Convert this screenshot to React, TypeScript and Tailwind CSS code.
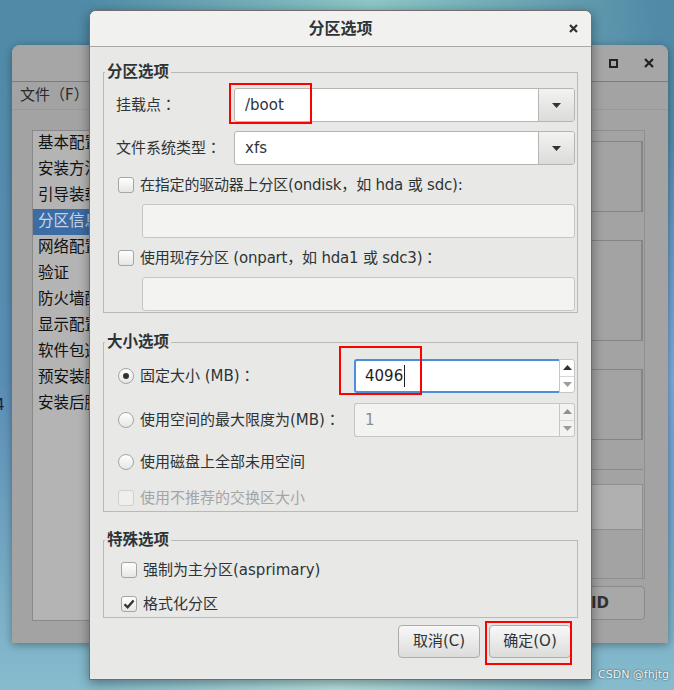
import type { ReactNode } from 'react';

const ink = 'text-[#2e3436]';

function Arrow({ dir, color }: { dir: 'up' | 'down'; color: string }) {
  return (
    <svg width="9" height="5" viewBox="0 0 9 5">
      <polygon points={dir === 'down' ? '0,0 9,0 4.5,5' : '0,5 9,5 4.5,0'} fill={color} />
    </svg>
  );
}

// centred full-width colon, as the GTK font draws it
function Colon() {
  return <span className="font-['Noto_Sans_CJK_TC',sans-serif]">：</span>;
}

function Check({ checked, disabled }: { checked?: boolean; disabled?: boolean }) {
  return (
    <span
      className={`flex h-[16px] w-[16px] shrink-0 items-center justify-center rounded-[3px] border ${
        disabled ? 'border-[#d0d0ce] bg-[#efefee]' : 'border-[#a5a5a2] bg-gradient-to-b from-white to-[#e6e6e4]'
      }`}
    >
      {checked ? (
        <svg width="12" height="10" viewBox="0 0 12 10">
          <path d="M1.5 5.2 L4.6 8.3 L10.6 1.4" stroke="#2e3436" strokeWidth="2.3" fill="none" />
        </svg>
      ) : null}
    </span>
  );
}

function Radio({ checked }: { checked?: boolean }) {
  return (
    <span className="flex h-[16px] w-[16px] shrink-0 items-center justify-center rounded-full border border-[#a5a5a2] bg-gradient-to-b from-white to-[#e6e6e4]">
      {checked ? <span className="h-[6px] w-[6px] rounded-full bg-[#2e3436]" /> : null}
    </span>
  );
}

function Combo({ value }: { value: string }) {
  return (
    <div className="flex h-[34px] flex-1 overflow-hidden rounded-[3px] border border-[#b5b5b2] bg-white">
      <div className={`flex flex-1 items-center pl-[10px] ${ink}`}>{value}</div>
      <div className="flex w-[36px] items-center justify-center border-l border-[#b5b5b2] bg-gradient-to-b from-[#f3f3f2] to-[#dbdbd9]">
        <Arrow dir="down" color="#2e3436" />
      </div>
    </div>
  );
}

function Spin({ value, focused }: { value: string; focused?: boolean }) {
  return (
    <div className="ml-auto mr-[2px] flex h-[34px] w-[221px]">
      <div
        className={`flex flex-1 items-center rounded-l-[3px] pl-[9px] ${
          focused ? 'border-2 border-r-0 border-[#4a90d9] bg-white text-[#1e1e1e]' : 'border border-r-0 border-[#c6c6c3] bg-[#f3f3f2] pl-[10px] text-[#8b8e8f]'
        }`}
      >
        {value}
        {focused ? <span className="ml-[1px] h-[22px] w-[1px] bg-[#1e1e1e]" /> : null}
      </div>
      <div
        className={`flex w-[16px] flex-col rounded-r-[3px] border border-[#c6c6c3] ${focused ? 'bg-white' : 'bg-[#f3f3f2]'}`}
      >
        <div className="flex flex-1 items-center justify-center border-b border-[#d6d6d3]">
          <Arrow dir="up" color={focused ? '#2e3436' : '#8e9192'} />
        </div>
        <div className="flex flex-1 items-center justify-center">
          <Arrow dir="down" color="#9a9d9e" />
        </div>
      </div>
    </div>
  );
}

function Group({ title, className, children }: { title: string; className: string; children: ReactNode }) {
  return (
    <fieldset className={`border border-[#b9b9b6] ${className}`}>
      <legend className={`ml-[1px] px-[2px] text-[15.5px] font-bold leading-[18px] ${ink}`}>{title}</legend>
      {children}
    </fieldset>
  );
}

function Field() {
  return <div className="ml-[38px] mr-[2px] h-[34px] rounded-[3px] border border-[#c6c6c3] bg-[#f3f3f2]" />;
}

function Button({ label }: { label: string }) {
  return (
    <button
      type="button"
      className={`h-[33px] w-[82px] rounded-[4px] border border-[#acacaa] bg-gradient-to-b from-[#f8f8f8] to-[#dcdcdb] text-[15px] ${ink}`}
    >
      {label}
    </button>
  );
}

const menu = ['基本配置', '安装方法', '引导装载程序选项', '分区信息', '网络配置', '验证', '防火墙配置', '显示配置', '软件包选择', '预安装脚本', '安装后脚本'];

function BackWindow() {
  return (
    <div className="absolute left-[12px] top-[45px] flex h-[598px] w-[656px] flex-col overflow-hidden rounded-t-[8px] bg-[#a3a3a3] shadow-[0_2px_8px_rgba(0,0,0,0.35)]">
      <div className="flex h-[37px] items-center justify-end gap-[26px] border-b border-[#7c7c7c] bg-[#a6a6a6] pr-[14px]">
        <span className="h-[9px] w-[9px] border-2 border-[#222]" />
        <svg width="10" height="10" viewBox="0 0 10 10">
          <path d="M1 1 L9 9 M9 1 L1 9" stroke="#222" strokeWidth="2.2" />
        </svg>
      </div>
      <div className="flex h-[28px] items-center border-b border-[#999] pl-[8px] text-[15px] text-[#2a2a2a]">文件（F）</div>
      <div className="flex flex-1 pl-[20px] pr-[23px] pt-[20px]">
        <div className="h-[491px] w-[270px] border border-[#8a8a8a] bg-[#b4b4b4]">
          {menu.map((item, i) => (
            <div
              key={item}
              className={`flex h-[26px] items-center pl-[5px] text-[15.5px] ${i === 3 ? 'bg-[#3b6ca3] text-[#c9d5e5]' : 'text-[#111]'}`}
            >
              {item}
            </div>
          ))}
        </div>
        <div className="ml-[16px] flex flex-1 flex-col">
          <div className="flex h-[448px] flex-col border-r border-t border-[#8f8f8f] pr-[1px]">
            <div className="mt-[10px] h-[71px] border border-r-2 border-[#858585]" />
            <div className="mt-[28px] h-[101px] border border-r-2 border-[#858585]" />
            <div className="mt-[28px] h-[71px] border border-r-2 border-[#858585]" />
            <div className="mt-[29px] border-t border-[#8a8a8a]" />
            <div className="mt-[14px] h-[46px] border border-[#8f8f8f] bg-[#b0b0b0]" />
            <div className="flex-1 border-r border-[#8f8f8f]" />
          </div>
          <div className="border-t border-[#8f8f8f]" />
          <div className="mt-[7px] flex h-[34px] items-center justify-end rounded-[4px] border border-[#8a8a8a] bg-[#a8a8a8] pr-[35px] text-[15px] font-semibold text-[#333]">
            RAID
          </div>
        </div>
      </div>
    </div>
  );
}

function Dialog() {
  return (
    <div className="absolute left-[89px] top-[10px] flex h-[670px] w-[503px] flex-col overflow-hidden rounded-t-[7px] border border-[#6e6e6e] bg-[#e8e8e7] shadow-[0_3px_12px_rgba(0,0,0,0.4)]">
      <div className="relative flex h-[36px] shrink-0 items-center justify-center border-b border-[#a8a8a6] bg-[#f1f1f0]">
        <span className={`text-[16px] font-bold ${ink}`}>分区选项</span>
        <svg className="absolute right-[13px] top-[13px]" width="9" height="9" viewBox="0 0 9 9">
          <path d="M1 1 L8 8 M8 1 L1 8" stroke="#2e3436" strokeWidth="2.2" />
        </svg>
      </div>

      <div className={`flex flex-col px-[13px] pt-[16px] text-[15px] ${ink}`}>
        <Group title="分区选项" className="pb-[1px] pt-[7px]">
          <div className="flex items-center pl-[12px] pr-[2px]">
            <span className="w-[118px]">挂载点<Colon /></span>
            <Combo value="/boot" />
          </div>
          <div className="mt-[9px] flex items-center pl-[12px] pr-[2px]">
            <span className="w-[118px]">文件系统类型<Colon /></span>
            <Combo value="xfs" />
          </div>
          <div className="mt-[9px] flex h-[22px] items-center gap-[6px] pl-[14px]">
            <Check />
            <span className="tracking-[-0.2px]">在指定的驱动器上分区(ondisk，如 hda 或 sdc):</span>
          </div>
          <div className="mt-[8px]">
            <Field />
          </div>
          <div className="mt-[9px] flex h-[22px] items-center gap-[6px] pl-[14px]">
            <Check />
            <span className="tracking-[-0.2px]">使用现存分区 (onpart，如 hda1 或 sdc3)<Colon /></span>
          </div>
          <div className="mt-[8px]">
            <Field />
          </div>
        </Group>

        <Group title="大小选项" className="mt-[20px] pb-[2px] pt-[8px]">
          <div className="flex items-center gap-[6px] pl-[14px]">
            <Radio checked />
            <span>固定大小 (MB)<Colon /></span>
            <Spin value="4096" focused />
          </div>
          <div className="mt-[10px] flex items-center gap-[6px] pl-[14px]">
            <Radio />
            <span>使用空间的最大限度为(MB)<Colon /></span>
            <Spin value="1" />
          </div>
          <div className="mt-[14px] flex h-[22px] items-center gap-[6px] pl-[14px]">
            <Radio />
            <span>使用磁盘上全部未用空间</span>
          </div>
          <div className="mt-[14px] flex h-[22px] items-center gap-[6px] pl-[14px] text-[#a3a6a7]">
            <Check disabled />
            <span>使用不推荐的交换区大小</span>
          </div>
        </Group>

        <Group title="特殊选项" className="mt-[19px] pb-[2px] pt-[10px]">
          <div className="flex h-[22px] items-center gap-[6px] pl-[17px]">
            <Check />
            <span>强制为主分区(asprimary)</span>
          </div>
          <div className="mt-[12px] flex h-[22px] items-center gap-[6px] pl-[17px]">
            <Check checked />
            <span>格式化分区</span>
          </div>
        </Group>

        <div className="mt-[7px] flex justify-end gap-[9px] pr-[7px]">
          <Button label="取消(C)" />
          <Button label="确定(O)" />
        </div>
      </div>

      <div className="absolute left-[139px] top-[72px] h-[41px] w-[83px] border-2 border-[#f00]" />
      <div className="absolute left-[249px] top-[335px] h-[49px] w-[83px] border-2 border-[#f00]" />
      <div className="absolute left-[395px] top-[610px] h-[44px] w-[87px] border-2 border-[#f00]" />
    </div>
  );
}

export default function App() {
  return (
    <div className="relative h-[690px] w-[674px] overflow-hidden bg-[radial-gradient(ellipse_at_55%_0%,#8ec7c6_0%,rgba(142,199,198,0)_55%),radial-gradient(ellipse_at_100%_55%,#7eaadb_0%,rgba(126,170,219,0)_45%),radial-gradient(ellipse_at_50%_100%,#b4e0dd_0%,rgba(180,224,221,0)_50%),linear-gradient(180deg,#4f8aa6_0%,#5a8db5_55%,#86bccd_100%)] font-['DejaVu_Sans','Noto_Sans_CJK_SC',sans-serif]">
      <span className="absolute left-[-5px] top-[394px] text-[15px] text-[#16263a]">4</span>
      <BackWindow />
      <Dialog />
      <span className="absolute left-[598px] top-[667px] text-[11px] text-[#f2f2f2] [text-shadow:0_0_2px_rgba(0,0,0,0.7)]">CSDN @fhjtg</span>
    </div>
  );
}
